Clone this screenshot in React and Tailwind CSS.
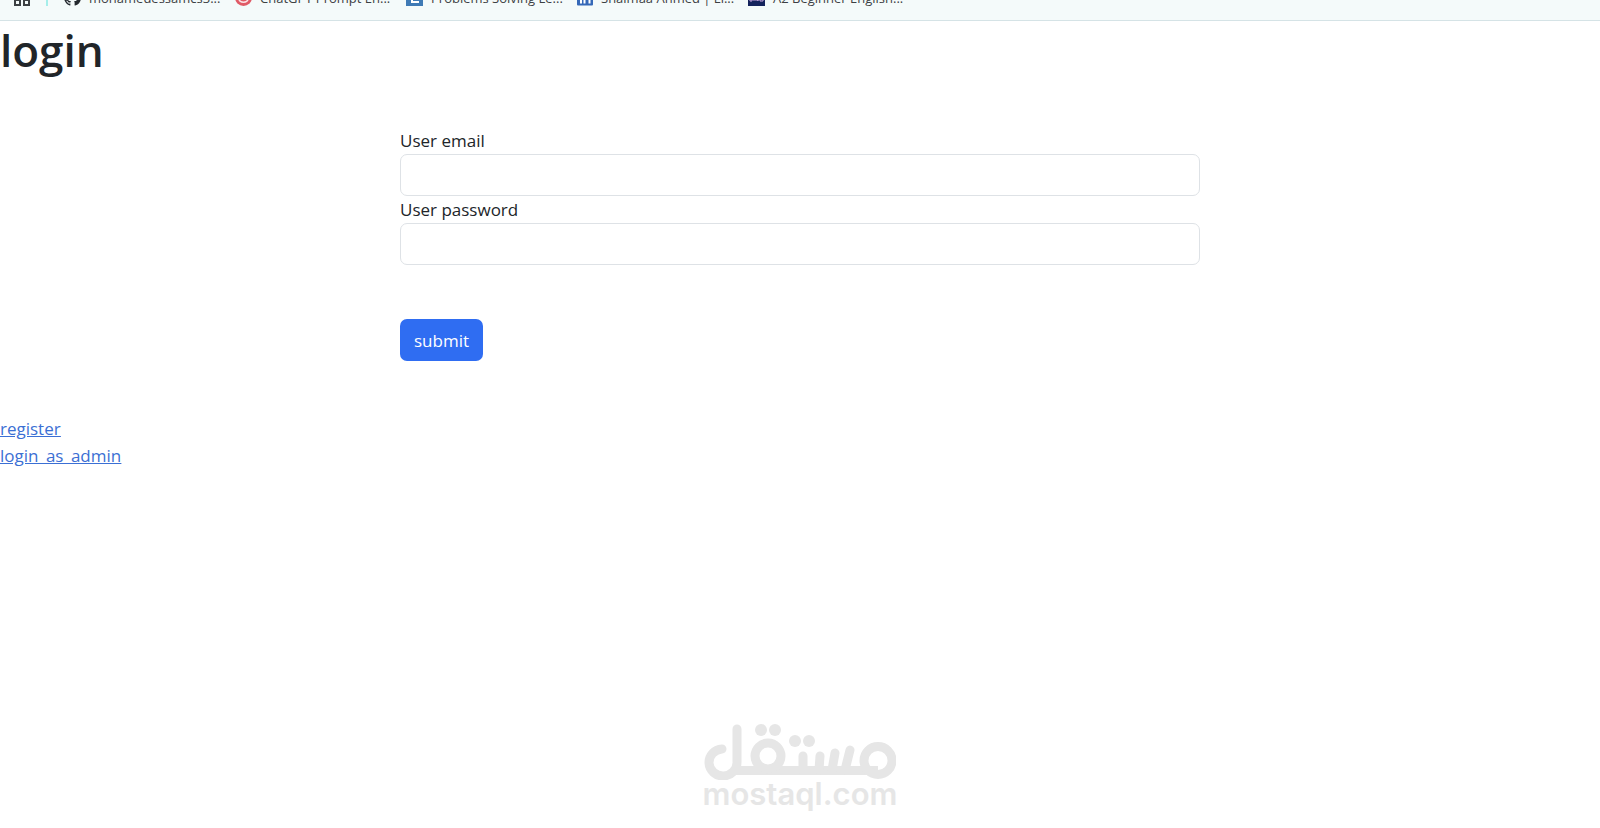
// src/App.jsx
// Pantalla de login con la barra de marcadores arriba y la marca de agua abajo.

import { useState } from 'react'

const FORM_VACIO = {
  email: '',
  password: '',
}

function IconoGithub() {
  return (
    <svg viewBox="0 0 16 16" className="w-[17px] h-[17px]" fill="#24292f">
      <path d="M8 0C3.58 0 0 3.58 0 8c0 3.54 2.29 6.53 5.47 7.59.4.07.55-.17.55-.38 0-.19-.01-.82-.01-1.49-2.01.37-2.53-.49-2.69-.94-.09-.23-.48-.94-.82-1.13-.28-.15-.68-.52-.01-.53.63-.01 1.08.58 1.23.82.72 1.21 1.87.87 2.33.66.07-.52.28-.87.51-1.07-1.78-.2-3.64-.89-3.64-3.95 0-.87.31-1.59.82-2.15-.08-.2-.36-1.02.08-2.12 0 0 .67-.21 2.2.82a7.6 7.6 0 0 1 4 0c1.53-1.04 2.2-.82 2.2-.82.44 1.1.16 1.92.08 2.12.51.56.82 1.27.82 2.15 0 3.07-1.87 3.75-3.65 3.95.29.25.54.73.54 1.48 0 1.07-.01 1.93-.01 2.2 0 .21.15.46.55.38A8 8 0 0 0 16 8c0-4.42-3.58-8-8-8z" />
    </svg>
  )
}

function IconoChat() {
  return (
    <svg viewBox="0 0 16 16" className="w-[17px] h-[17px]">
      <circle cx="8" cy="8" r="8" fill="#e05a66" />
      <path d="M3.500 8.500a4.500 4 0 0 0 9 0" fill="none" stroke="#fbe3e5" strokeWidth="1.500" />
    </svg>
  )
}

function IconoLetraE() {
  return (
    <svg viewBox="0 0 17 17" className="w-[17px] h-[17px]">
      <rect width="17" height="17" fill="#3f7ab5" />
      <path d="M6 3v10h7" fill="none" stroke="#fff" strokeWidth="2" />
    </svg>
  )
}

function IconoLinkedin() {
  return (
    <svg viewBox="0 0 16 16" className="w-4 h-[17px]">
      <rect width="16" height="16" rx="1" fill="#3568b8" />
      <path d="M4 6v8M7.500 6v8M12.500 14V9a2.500 2.500 0 0 0-5 0" fill="none" stroke="#fff" strokeWidth="2" />
    </svg>
  )
}

function IconoIngles() {
  return (
    <svg viewBox="0 0 17 17" className="w-[17px] h-[17px]">
      <rect width="17" height="17" fill="#14235c" />
      <path d="M2 8v4h2V8M6 8v4M8 12V8l2 4V8M12 8v4h3V8" fill="none" stroke="#c9a9e0" />
    </svg>
  )
}

const MARCADORES = [
  { id: 1, titulo: 'mohamedessamcs3...', Icono: IconoGithub },
  { id: 2, titulo: 'ChatGPT Prompt En...', Icono: IconoChat },
  { id: 3, titulo: 'Problems Solving Le...', Icono: IconoLetraE },
  { id: 4, titulo: 'Shaimaa Ahmed | Li...', Icono: IconoLinkedin },
  { id: 5, titulo: 'A2 Beginner English...', Icono: IconoIngles },
]

function BarraMarcadores() {
  return (
    <nav className="h-[21px] flex items-end overflow-hidden bg-[#f4fafa] border-b border-[#d5e3e6] pl-3.5 pb-3.5 text-[13px] leading-4 text-[#3c4043]">
      <svg viewBox="0 0 16 16" className="w-4 h-4 shrink-0" fill="none" stroke="#3c4043" strokeWidth="2">
        <path d="M1 1h5v5H1zM10 1h5v5h-5zM1 10h5v5H1zM10 10h5v5h-5z" />
      </svg>
      <span className="w-0.5 h-4 mx-4 bg-[#a5eeea]" />
      {MARCADORES.map(({ id, titulo, Icono }) => (
        <a key={id} href="#" className="w-[171px] shrink-0 flex items-end gap-2 whitespace-nowrap">
          <Icono />
          {titulo}
        </a>
      ))}
    </nav>
  )
}

function MarcaDeAgua() {
  return (
    <div className="w-48 flex flex-col items-center text-[#e6e6e6]">
      <svg viewBox="0 0 192 56" className="w-full" fill="none" stroke="currentColor" strokeWidth="9" strokeLinecap="round" strokeLinejoin="round">
        <path d="M18 25a14 13.500 0 1 0 15 13V5" />
        <path d="M31 46.500H174" strokeLinecap="butt" />
        <circle cx="64" cy="32" r="13" />
        <circle cx="174" cy="36.500" r="14" />
        <path d="M99 32v14M116 32l-1 14M131 29l-3 17M146 26l-5 20" />
        <g fill="currentColor" stroke="none">
          <circle cx="57" cy="6" r="6" />
          <circle cx="71" cy="6" r="6" />
          <circle cx="91" cy="17" r="6" />
          <circle cx="105" cy="17" r="6" />
        </g>
      </svg>
      <span className="font-[Inter,sans-serif] font-semibold text-[31px] leading-7">mostaql.com</span>
    </div>
  )
}

export default function App() {
  const [form, setForm] = useState(FORM_VACIO)

  function handleChange(e) {
    setForm({ ...form, [e.target.name]: e.target.value })
  }

  function handleSubmit(e) {
    e.preventDefault()
  }

  return (
    <div className="min-h-screen flex flex-col bg-white text-[#212529] text-[17px] leading-[27px] font-['Open_Sans',sans-serif]">
      <BarraMarcadores />

      <h1 className="pt-[3px] text-[44px] leading-[53px] font-semibold">login</h1>

      {/* Formulario */}
      <form onSubmit={handleSubmit} className="w-1/2 mx-auto mt-[50px]">
        <label htmlFor="email" className="block">User email</label>
        <input
          id="email"
          type="email"
          name="email"
          value={form.email}
          onChange={handleChange}
          className="block w-full h-[42px] border border-[#dee2e6] rounded-[7px] px-3"
        />
        <label htmlFor="password" className="block">User password</label>
        <input
          id="password"
          type="password"
          name="password"
          value={form.password}
          onChange={handleChange}
          className="block w-full h-[42px] border border-[#dee2e6] rounded-[7px] px-3"
        />
        <button type="submit" className="block h-[42px] mt-[54px] px-3.5 rounded-[7px] bg-[#2f6df2] text-white">
          submit
        </button>
      </form>

      {/* Enlaces */}
      <div className="mt-[54px] flex flex-col items-start text-[#3b6fd4] underline">
        <a href="#register">register</a>
        <a href="#admin">login_as_admin</a>
      </div>

      <footer className="mt-auto pb-5 flex justify-center">
        <MarcaDeAgua />
      </footer>
    </div>
  )
}
